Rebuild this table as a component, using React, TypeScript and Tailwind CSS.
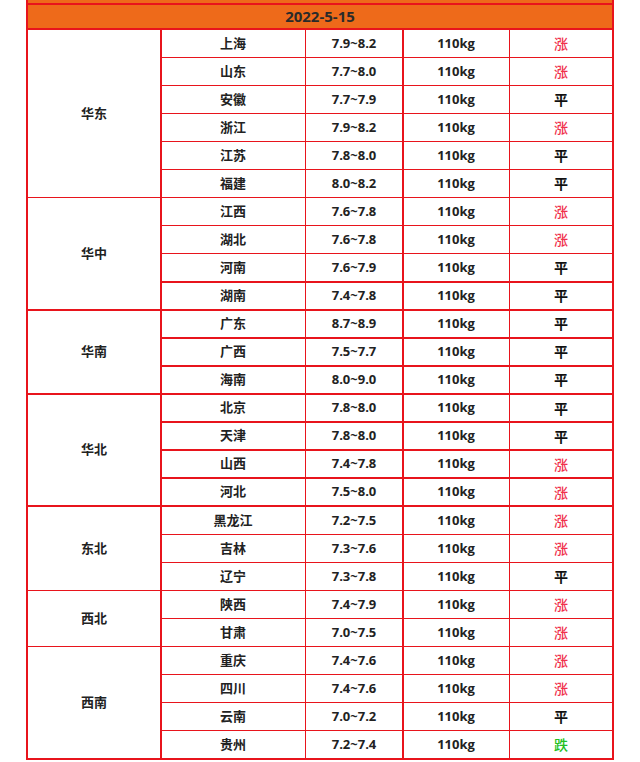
import React from 'react';

type Trend = '涨' | '平' | '跌';

interface Row {
  province: string;
  price: string;
  trend: Trend;
}

interface Region {
  name: string;
  rows: Row[];
}

const regions: Region[] = [
  {
    name: '华东',
    rows: [
      { province: '上海', price: '7.9~8.2', trend: '涨' },
      { province: '山东', price: '7.7~8.0', trend: '涨' },
      { province: '安徽', price: '7.7~7.9', trend: '平' },
      { province: '浙江', price: '7.9~8.2', trend: '涨' },
      { province: '江苏', price: '7.8~8.0', trend: '平' },
      { province: '福建', price: '8.0~8.2', trend: '平' },
    ],
  },
  {
    name: '华中',
    rows: [
      { province: '江西', price: '7.6~7.8', trend: '涨' },
      { province: '湖北', price: '7.6~7.8', trend: '涨' },
      { province: '河南', price: '7.6~7.9', trend: '平' },
      { province: '湖南', price: '7.4~7.8', trend: '平' },
    ],
  },
  {
    name: '华南',
    rows: [
      { province: '广东', price: '8.7~8.9', trend: '平' },
      { province: '广西', price: '7.5~7.7', trend: '平' },
      { province: '海南', price: '8.0~9.0', trend: '平' },
    ],
  },
  {
    name: '华北',
    rows: [
      { province: '北京', price: '7.8~8.0', trend: '平' },
      { province: '天津', price: '7.8~8.0', trend: '平' },
      { province: '山西', price: '7.4~7.8', trend: '涨' },
      { province: '河北', price: '7.5~8.0', trend: '涨' },
    ],
  },
  {
    name: '东北',
    rows: [
      { province: '黑龙江', price: '7.2~7.5', trend: '涨' },
      { province: '吉林', price: '7.3~7.6', trend: '涨' },
      { province: '辽宁', price: '7.3~7.8', trend: '平' },
    ],
  },
  {
    name: '西北',
    rows: [
      { province: '陕西', price: '7.4~7.9', trend: '涨' },
      { province: '甘肃', price: '7.0~7.5', trend: '涨' },
    ],
  },
  {
    name: '西南',
    rows: [
      { province: '重庆', price: '7.4~7.6', trend: '涨' },
      { province: '四川', price: '7.4~7.6', trend: '涨' },
      { province: '云南', price: '7.0~7.2', trend: '平' },
      { province: '贵州', price: '7.2~7.4', trend: '跌' },
    ],
  },
];

const trendColor: Record<Trend, string> = {
  涨: 'text-[#f0304c] font-medium',
  平: 'text-[#111]',
  跌: 'text-[#22c022] font-medium',
};

// explicit row-span classes so tailwind can see them
const spanClass: Record<number, string> = {
  2: 'row-span-2',
  3: 'row-span-3',
  4: 'row-span-4',
  6: 'row-span-6',
};

export default function App() {
  const cell = 'bg-white flex items-center justify-center';

  return (
    <div
      className="w-[640px] h-[762px] bg-white pl-[26px] pr-[26px]"
      style={{ fontFamily: '"Open Sans", "Noto Sans CJK SC", sans-serif' }}
    >
      <div className="w-[588px] border-x-2 border-b-2 border-[#e8141c] bg-[#e8141c]">
        {/* top strip */}
        <div className="h-[3px] bg-[#ee6a1a]" />
        <div className="h-[2px]" />

        {/* date header */}
        <div className="h-[23px] bg-[#ee6a1a] flex items-center justify-center text-[15px] font-bold text-[#2a2a2a]">
          2022-5-15
        </div>
        <div className="h-[2px]" />

        {/* body */}
        <div className="grid grid-cols-[132px_143px_96px_105px_1fr] grid-rows-[repeat(26,1fr)] gap-[1.5px] h-[728px] text-[13px] font-bold text-[#222]">
          {regions.map((region) =>
            region.rows.map((row, i) => (
              <React.Fragment key={region.name + row.province}>
                {i === 0 && (
                  <div className={`${cell} ${spanClass[region.rows.length]}`}>{region.name}</div>
                )}
                <div className={cell}>{row.province}</div>
                <div className={cell}>{row.price}</div>
                <div className={cell}>110kg</div>
                <div className={`${cell} text-[14px] ${trendColor[row.trend]}`}>{row.trend}</div>
              </React.Fragment>
            ))
          )}
        </div>
      </div>
    </div>
  );
}
